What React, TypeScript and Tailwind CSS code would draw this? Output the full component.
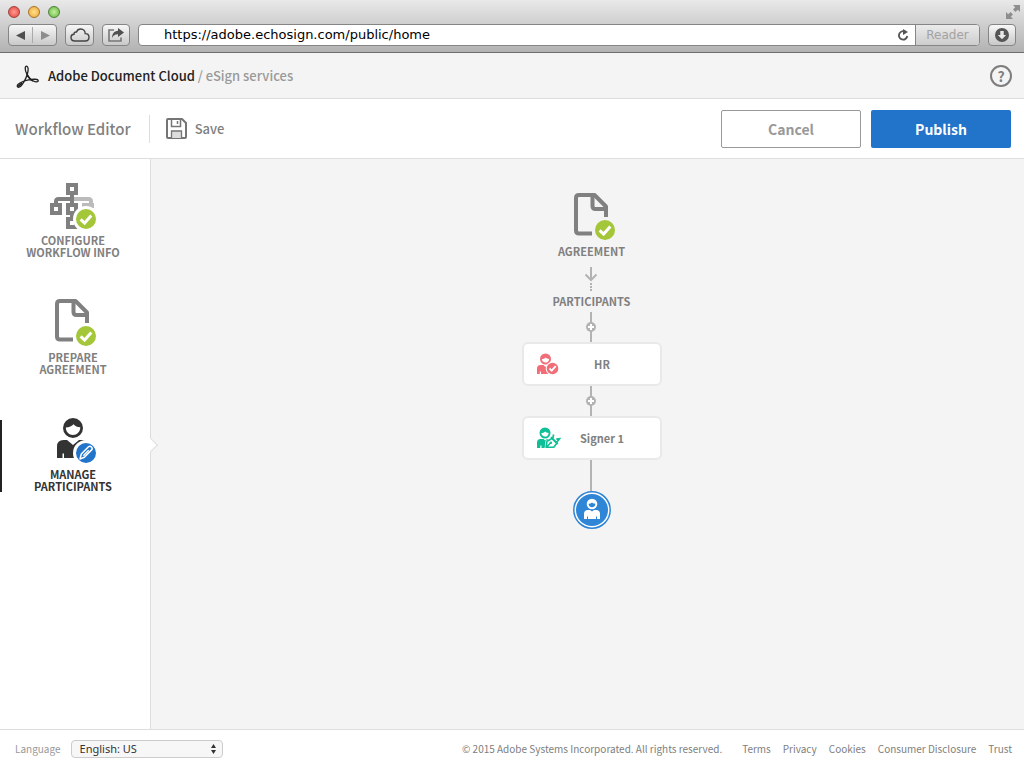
import type { ReactNode } from 'react';

type StepProps = {
  icon: ReactNode;
  lines: [string, string];
  active?: boolean;
};

const footerLinks = ['Terms', 'Privacy', 'Cookies', 'Consumer Disclosure', 'Trust'];

function CheckBadge() {
  return (
    <>
      <circle cx="37" cy="37" r="10" fill="#a4c639" />
      <path d="M31.600 37.300l4 3.700 6.700-7.500" fill="none" stroke="#fff" strokeWidth="3" />
    </>
  );
}

function WorkflowIcon() {
  return (
    <svg width="48" height="48" viewBox="0 0 48 48" fill="none" aria-hidden="true">
      <path d="M23 17h16.500q2.500 0 2.500 2.500V21" stroke="#bbb" strokeWidth="4" />
      <path d="M33 21h12v5H33z" fill="#bbb" />
      <path d="M23 12v10M23 17H9.500Q7 17 7 19.500V21" stroke="#808080" strokeWidth="4" />
      <g stroke="#808080" strokeWidth="4">
        <path d="M19 3h8v8h-8zM3 23h8v8H3zM19 23h8v8h-8zM19 37h8v8h-8z" />
      </g>
      <path d="M21 32h4v3h-4z" fill="#808080" />
      <circle cx="37" cy="37" r="13" fill="#fff" />
      <CheckBadge />
    </svg>
  );
}

function DocumentIcon({ halo }: { halo: string }) {
  return (
    <svg width="48" height="48" viewBox="0 0 48 48" fill="none" aria-hidden="true">
      <g stroke="#808080" strokeWidth="4" strokeLinejoin="round">
        <path d="M24 40.500H11Q8 40.500 8 37.500V5Q8 2 11 2h15.500L38 13.500V24" />
        <path d="M24.500 3v10q0 3 3 3H38" />
      </g>
      <circle cx="37" cy="37" r="13" fill={halo} />
      <CheckBadge />
    </svg>
  );
}

function ManageIcon() {
  return (
    <svg width="48" height="48" viewBox="0 0 48 48" fill="none" aria-hidden="true">
      <circle cx="24" cy="12" r="10" fill="#333" />
      <path d="M16.800 11.500c3.600-.2 6-1.300 7.800-3.300 1.500 1.800 3.700 2.900 6.700 3.100-.1 4.600-3.300 7.700-7.300 7.700-4.100 0-7.200-3.300-7.200-7.500z" fill="#fff" />
      <path d="M8 42V30.500Q8 24 14.500 24H18l6 5 6-5h3.500Q40 24 40 30.500V42H15v-4.500h-1.500V42z" fill="#333" />
      <path d="M20 23.500h8l-4 4z" fill="#fff" />
      <circle cx="37" cy="37" r="13" fill="#fff" />
      <circle cx="37" cy="37" r="10" fill="#2174ca" />
      <path d="M31 43l1.300-5 7.200-7.200q1.400-1.200 2.900.2t.2 2.900l-7.200 7.300zM34.300 39.700l5.400-5.400" stroke="#fff" strokeWidth="1.500" strokeLinejoin="round" />
    </svg>
  );
}

function ApproverIcon() {
  return (
    <svg width="24" height="24" viewBox="0 0 24 24" fill="none" aria-hidden="true">
      <circle cx="8.500" cy="7" r="5.500" fill="#f16d78" />
      <path d="M4.900 7c1.500 0 2.700-.5 3.700-1.500.7.900 2 1.400 3.500 1.400 0 2.200-1.600 3.700-3.600 3.700S4.900 9.200 4.900 7z" fill="#fff" />
      <path d="M0 22v-5.500Q0 13 3.500 13h3l2 2 2-2H14v9H4v-2.500H2.800V22z" fill="#f16d78" />
      <circle cx="15.500" cy="16.500" r="6.800" fill="#fff" />
      <circle cx="15.500" cy="16.500" r="5.800" fill="#f16d78" />
      <path d="M12.500 16.500l2.200 2.200 4-4.600" stroke="#fff" strokeWidth="1.800" />
    </svg>
  );
}

function SignerIcon() {
  return (
    <svg width="24" height="24" viewBox="0 0 24 24" fill="none" aria-hidden="true">
      <circle cx="8" cy="7" r="5.500" fill="#0fbf97" />
      <path d="M4.400 7c1.500 0 2.700-.5 3.700-1.500.7.900 2 1.400 3.500 1.400 0 2.200-1.600 3.700-3.600 3.700S4.400 9.200 4.400 7z" fill="#fff" />
      <path d="M0 22v-5.500Q0 13 3.500 13h3l1.800 1.500L10 13h2l-4 9H4.500v-2.500H3.300V22z" fill="#0fbf97" />
      <path d="M7.500 23l1-8 6-4 6.500 6-3 5z" fill="#fff" />
      <path d="M9 21.300l1-6 5-2.800 4.800 4.700-3 4zM9.500 21l4-4" stroke="#0fbf97" strokeWidth="1.600" strokeLinejoin="round" />
      <circle cx="13.900" cy="16.700" r="1.200" fill="#0fbf97" />
      <path d="M14 11.200l6.800 6.700M15.800 12.500l.8-4M19.500 16.500l3-3.800-3.200.4" stroke="#0fbf97" strokeWidth="1.700" />
    </svg>
  );
}

function ParticipantBadge() {
  return (
    <svg width="38" height="38" viewBox="0 0 38 38" fill="none" aria-hidden="true">
      <circle cx="19" cy="19" r="18.200" fill="#fff" stroke="#2f86d7" strokeWidth="1.500" />
      <circle cx="19" cy="19" r="16" fill="#2f86d7" />
      <circle cx="19" cy="13" r="5.300" fill="#fff" />
      <path d="M15.600 12.800c1.400 0 2.500-.4 3.400-1.300.8.800 2 1.200 3.400 1.200 0 2.200-1.500 3.600-3.400 3.600s-3.400-1.400-3.400-3.500z" fill="#2f86d7" />
      <path d="M11 28v-5q0-4 4-4h2l2 1.500 2-1.500h2q4 0 4 4v5h-3v-2.500h-1V28h-8v-2.500h-1V28z" fill="#fff" />
    </svg>
  );
}

function AcrobatLogo() {
  return (
    <svg width="24" height="24" viewBox="0 0 24 24" fill="none" stroke="#222" strokeLinejoin="round" aria-hidden="true">
      <path d="M10.600 9.500C8.800 6 8.800 2.200 10.500 2.200S12.600 5.300 11.500 9.500C10.200 14.500 6 22.500 3 23.200c-2 .3-2.300-1.500-.8-2.900 2-1.900 6-3.600 10.500-4.500 4.800-.9 9.300-.8 9.500.8.200 1.500-2.500 1.600-5 .4C14 15.400 12.100 12.500 10.600 9.500z" strokeWidth="1.300" />
      <path d="M10.800 10c1.500 3.200 3.500 5.700 6.200 7M2.200 22.500l4-3.500" strokeWidth="1.700" />
    </svg>
  );
}

function SidebarStep({ icon, lines, active = false }: StepProps) {
  return (
    <li className="relative">
      {active ? <span className="absolute top-1 left-0 h-[72px] w-0.5 bg-[#222]" /> : null}
      <a
        href="#"
        className={
          active
            ? 'flex flex-col items-center gap-1 pr-1 text-[11px] leading-3 font-bold text-[#333]'
            : 'flex flex-col items-center gap-1 pr-1 text-[11px] leading-3 font-bold text-[#808080]'
        }
      >
        {icon}
        <span className="text-center">
          {lines[0]}
          <br />
          {lines[1]}
        </span>
      </a>
      {active ? (
        <span className="absolute top-6 -right-[6px] size-[10px] rotate-45 border-t border-r border-[#ddd] bg-white" />
      ) : null}
    </li>
  );
}

function AddStep() {
  return (
    <button type="button" aria-label="Add participant" className="mr-0.5 block">
      <svg width="12" height="30" viewBox="0 0 12 30" fill="none" aria-hidden="true">
        <path d="M6 0v30" stroke="#b3b3b3" strokeWidth="2" />
        <circle cx="6" cy="15" r="5" fill="#b3b3b3" />
        <path d="M6 12v6M3 15h6" stroke="#fff" strokeWidth="2" />
      </svg>
    </button>
  );
}

function ParticipantCard({ icon, name }: { icon: ReactNode; name: string }) {
  return (
    <button
      type="button"
      className="flex h-11 w-[140px] items-center rounded-md border-2 border-[#e9e9e9] bg-white pr-5 pl-[13px] text-[11px] leading-4 font-bold text-[#808080]"
    >
      {icon}
      <span className="flex-1 pl-1 text-center">{name}</span>
    </button>
  );
}

function BrowserBar() {
  const control =
    'flex h-[22px] items-center justify-center rounded border border-[#858585] bg-linear-to-b from-[#f7f7f7] to-[#c9c9c9]';

  return (
    <div className="h-[53px] border-b border-[#6d6d6d] bg-linear-to-b from-[#e9e9e9] to-[#b2b2b2]">
      <div className="flex h-6 items-center justify-between pr-1 pl-2">
        <div className="flex gap-2">
          <span className="size-3 rounded-full border border-[#a0403c] bg-radial from-[#ff9a92] to-[#df3b3b]" />
          <span className="size-3 rounded-full border border-[#a87428] bg-radial from-[#ffe08a] to-[#eda52d]" />
          <span className="size-3 rounded-full border border-[#4f8038] bg-radial from-[#c0f09a] to-[#65b540]" />
        </div>
        <svg width="14" height="14" viewBox="0 0 14 14" fill="#8e8e8e" aria-hidden="true">
          <path d="M7 0h7v7l-2.200-2.200L9.500 7 7 4.500l2.200-2.300zM7 14H0V7l2.200 2.200L4.500 7 7 9.500l-2.200 2.300z" />
        </svg>
      </div>
      <div className="flex items-center pr-2 pl-2">
        <div className={`${control} w-[49px]`}>
          <button type="button" aria-label="Back" className="flex flex-1 justify-center">
            <svg width="10" height="9" viewBox="0 0 10 9" fill="#4f4f4f" aria-hidden="true"><path d="M9 0v9L0 4.500z" /></svg>
          </button>
          <span className="h-4 w-px bg-[#aaa]" />
          <button type="button" aria-label="Forward" className="flex flex-1 justify-center">
            <svg width="10" height="9" viewBox="0 0 10 9" fill="#8d8d8d" aria-hidden="true"><path d="M1 0v9l9-4.500z" /></svg>
          </button>
        </div>
        <button type="button" aria-label="iCloud tabs" className={`${control} ml-2 w-[29px]`}>
          <svg width="20" height="14" viewBox="0 0 20 14" fill="none" stroke="#444" strokeWidth="1.400" aria-hidden="true">
            <path d="M5 13C2.500 13 1 11.500 1 9.500S2.500 6.300 4 6.300C3.900 4.500 5.200 3.700 6.500 4 7.200 2 8.800 1 10.700 1c2.600 0 4.500 2 4.500 4.600 2.300 0 3.800 1.600 3.800 3.700S17.400 13 15.300 13z" />
          </svg>
        </button>
        <button type="button" aria-label="Share" className={`${control} ml-2 w-7`}>
          <svg width="16" height="14" viewBox="0 0 16 14" aria-hidden="true">
            <path d="M6 2H1v11h12V9.500" fill="none" stroke="#777" strokeWidth="1.600" />
            <path d="M10 0l6 4.500L10 9V6.300C7.200 6.200 5.300 7.500 4 10c0-4.300 2-7 6-7.300z" fill="#505050" />
          </svg>
        </button>
        <div className="ml-2 flex h-[22px] flex-1 overflow-hidden rounded border border-[#858585] bg-white">
          <input
            aria-label="Address"
            defaultValue="https://adobe.echosign.com/public/home"
            className="min-w-0 flex-1 pl-[25px] font-['DejaVu_Sans',sans-serif] text-[13px] leading-5 text-black outline-none"
          />
          <button type="button" aria-label="Reload" className="px-1.5">
            <svg width="12" height="12" viewBox="0 0 12 12" fill="none" aria-hidden="true">
              <path d="M8 2.600A4.200 4.200 0 1 0 10.300 7" stroke="#555" strokeWidth="1.800" />
              <path d="M6 0l5 3-5 3z" fill="#555" />
            </svg>
          </button>
          <button
            type="button"
            className="w-16 border-l border-[#858585] bg-linear-to-b from-[#ebebeb] to-[#cdcdcd] font-['DejaVu_Sans',sans-serif] text-[12px] leading-5 text-[#a3a3a3]"
          >
            Reader
          </button>
        </div>
        <button type="button" aria-label="Downloads" className={`${control} ml-2 w-7`}>
          <svg width="14" height="14" viewBox="0 0 14 14" aria-hidden="true">
            <circle cx="7" cy="7" r="7" fill="#555" />
            <path d="M5.300 3h3.400v4h2.500L7 11.300 2.800 7h2.500z" fill="#e8e8e8" />
          </svg>
        </button>
      </div>
    </div>
  );
}

export default function App() {
  return (
    <div className="flex min-h-screen flex-col bg-white font-['Noto_Sans_CJK_SC','Open_Sans',sans-serif] text-[#808080]">
      <BrowserBar />

      <header className="flex h-[46px] items-center justify-between border-b border-[#ddd] bg-[#f4f4f4] pr-3 pl-4">
        <div className="flex items-center gap-2">
          <AcrobatLogo />
          <p className="text-[13px] leading-5 font-medium text-[#222]">
            Adobe Document Cloud <span className="text-[#999]">/ eSign services</span>
          </p>
        </div>
        <button type="button" aria-label="Help" className="flex size-[22px] items-center justify-center rounded-full border-2 border-[#7d7d7d] text-[14px] leading-4 font-bold">
          ?
        </button>
      </header>

      <div className="flex h-[60px] items-center justify-between border-b border-[#ddd] pr-[13px] pl-[15px]">
        <div className="flex items-center">
          <h1 className="text-[15px] leading-6 font-medium">Workflow Editor</h1>
          <span className="mr-4 ml-[18px] h-7 w-px bg-[#ddd]" />
          <button type="button" className="flex items-center gap-2 text-[13px] leading-5 font-medium">
            <svg width="21" height="21" viewBox="0 0 21 21" fill="none" stroke="#757575" strokeWidth="2" aria-hidden="true">
              <path d="M1 2q0-1 1-1h14l4 4v14q0 1-1 1H2q-1 0-1-1z" strokeLinejoin="round" />
              <path d="M5.500 1v7.500h9V1M11.500 3v3" strokeWidth="1.500" />
              <path d="M5.500 20v-7h10v7" fill="#ddd" strokeWidth="1.300" />
            </svg>
            Save
          </button>
        </div>
        <div className="flex gap-[10px]">
          <button type="button" className="h-[38px] w-[140px] rounded-xs border border-[#999] bg-white text-[14px] leading-5 font-bold text-[#999]">
            Cancel
          </button>
          <button type="button" className="h-[38px] w-[140px] rounded-xs bg-[#2174ca] text-[14px] leading-5 font-bold text-white">
            Publish
          </button>
        </div>
      </div>

      <div className="flex flex-1">
        <nav className="w-[151px] border-r border-[#ddd] pt-[23px]">
          <ul className="flex flex-col gap-[41px]">
            <SidebarStep icon={<WorkflowIcon />} lines={['CONFIGURE', 'WORKFLOW INFO']} />
            <SidebarStep icon={<DocumentIcon halo="#fff" />} lines={['PREPARE', 'AGREEMENT']} />
            <SidebarStep icon={<ManageIcon />} lines={['MANAGE', 'PARTICIPANTS']} active />
          </ul>
        </nav>

        <main className="flex flex-1 flex-col items-center bg-[#f4f4f4] pt-[34px] pl-2 text-[11px] leading-4 font-bold">
          <DocumentIcon halo="#f4f4f4" />
          <h2 className="pt-0.5">AGREEMENT</h2>
          <svg width="14" height="24" viewBox="0 0 14 24" fill="none" stroke="#b3b3b3" strokeWidth="2" className="mt-2 mr-0.5" aria-hidden="true">
            <path d="M7 0v13M1.500 7.500L7 13l5.500-5.500" />
            <path d="M7 16v8" strokeDasharray="2 1" />
          </svg>
          <h2 className="mt-0.5">PARTICIPANTS</h2>
          <div className="mt-[3px] flex flex-col items-center">
            <AddStep />
            <ParticipantCard icon={<ApproverIcon />} name="HR" />
            <AddStep />
            <ParticipantCard icon={<SignerIcon />} name="Signer 1" />
            <span className="mr-0.5 h-[31px] w-0.5 bg-[#b3b3b3]" />
            <ParticipantBadge />
          </div>
        </main>
      </div>

      <footer className="flex h-[39px] items-center justify-between border-t border-[#ddd] pr-3 pl-[15px] text-[10px] leading-4">
        <div className="flex items-center gap-[10px]">
          <label htmlFor="language" className="text-[#999]">Language</label>
          <div className="relative">
            <select
              id="language"
              className="block h-[18px] w-[152px] appearance-none rounded border border-[#ccc] bg-[#f7f7f7] pl-2 font-['Noto_Sans',sans-serif] text-[11px] leading-4 text-[#333]"
            >
              <option>English: US</option>
            </select>
            <svg width="5" height="10" viewBox="0 0 5 10" fill="#333" className="pointer-events-none absolute top-1 right-[7px]" aria-hidden="true">
              <path d="M0 4l2.500-4L5 4zM0 6l2.500 4L5 6z" />
            </svg>
          </div>
        </div>
        <div className="flex items-center gap-5">
          <p>© 2015 Adobe Systems Incorporated. All rights reserved.</p>
          <nav className="flex gap-3">
            {footerLinks.map((label) => (
              <a key={label} href="#">{label}</a>
            ))}
          </nav>
        </div>
      </footer>
    </div>
  );
}
